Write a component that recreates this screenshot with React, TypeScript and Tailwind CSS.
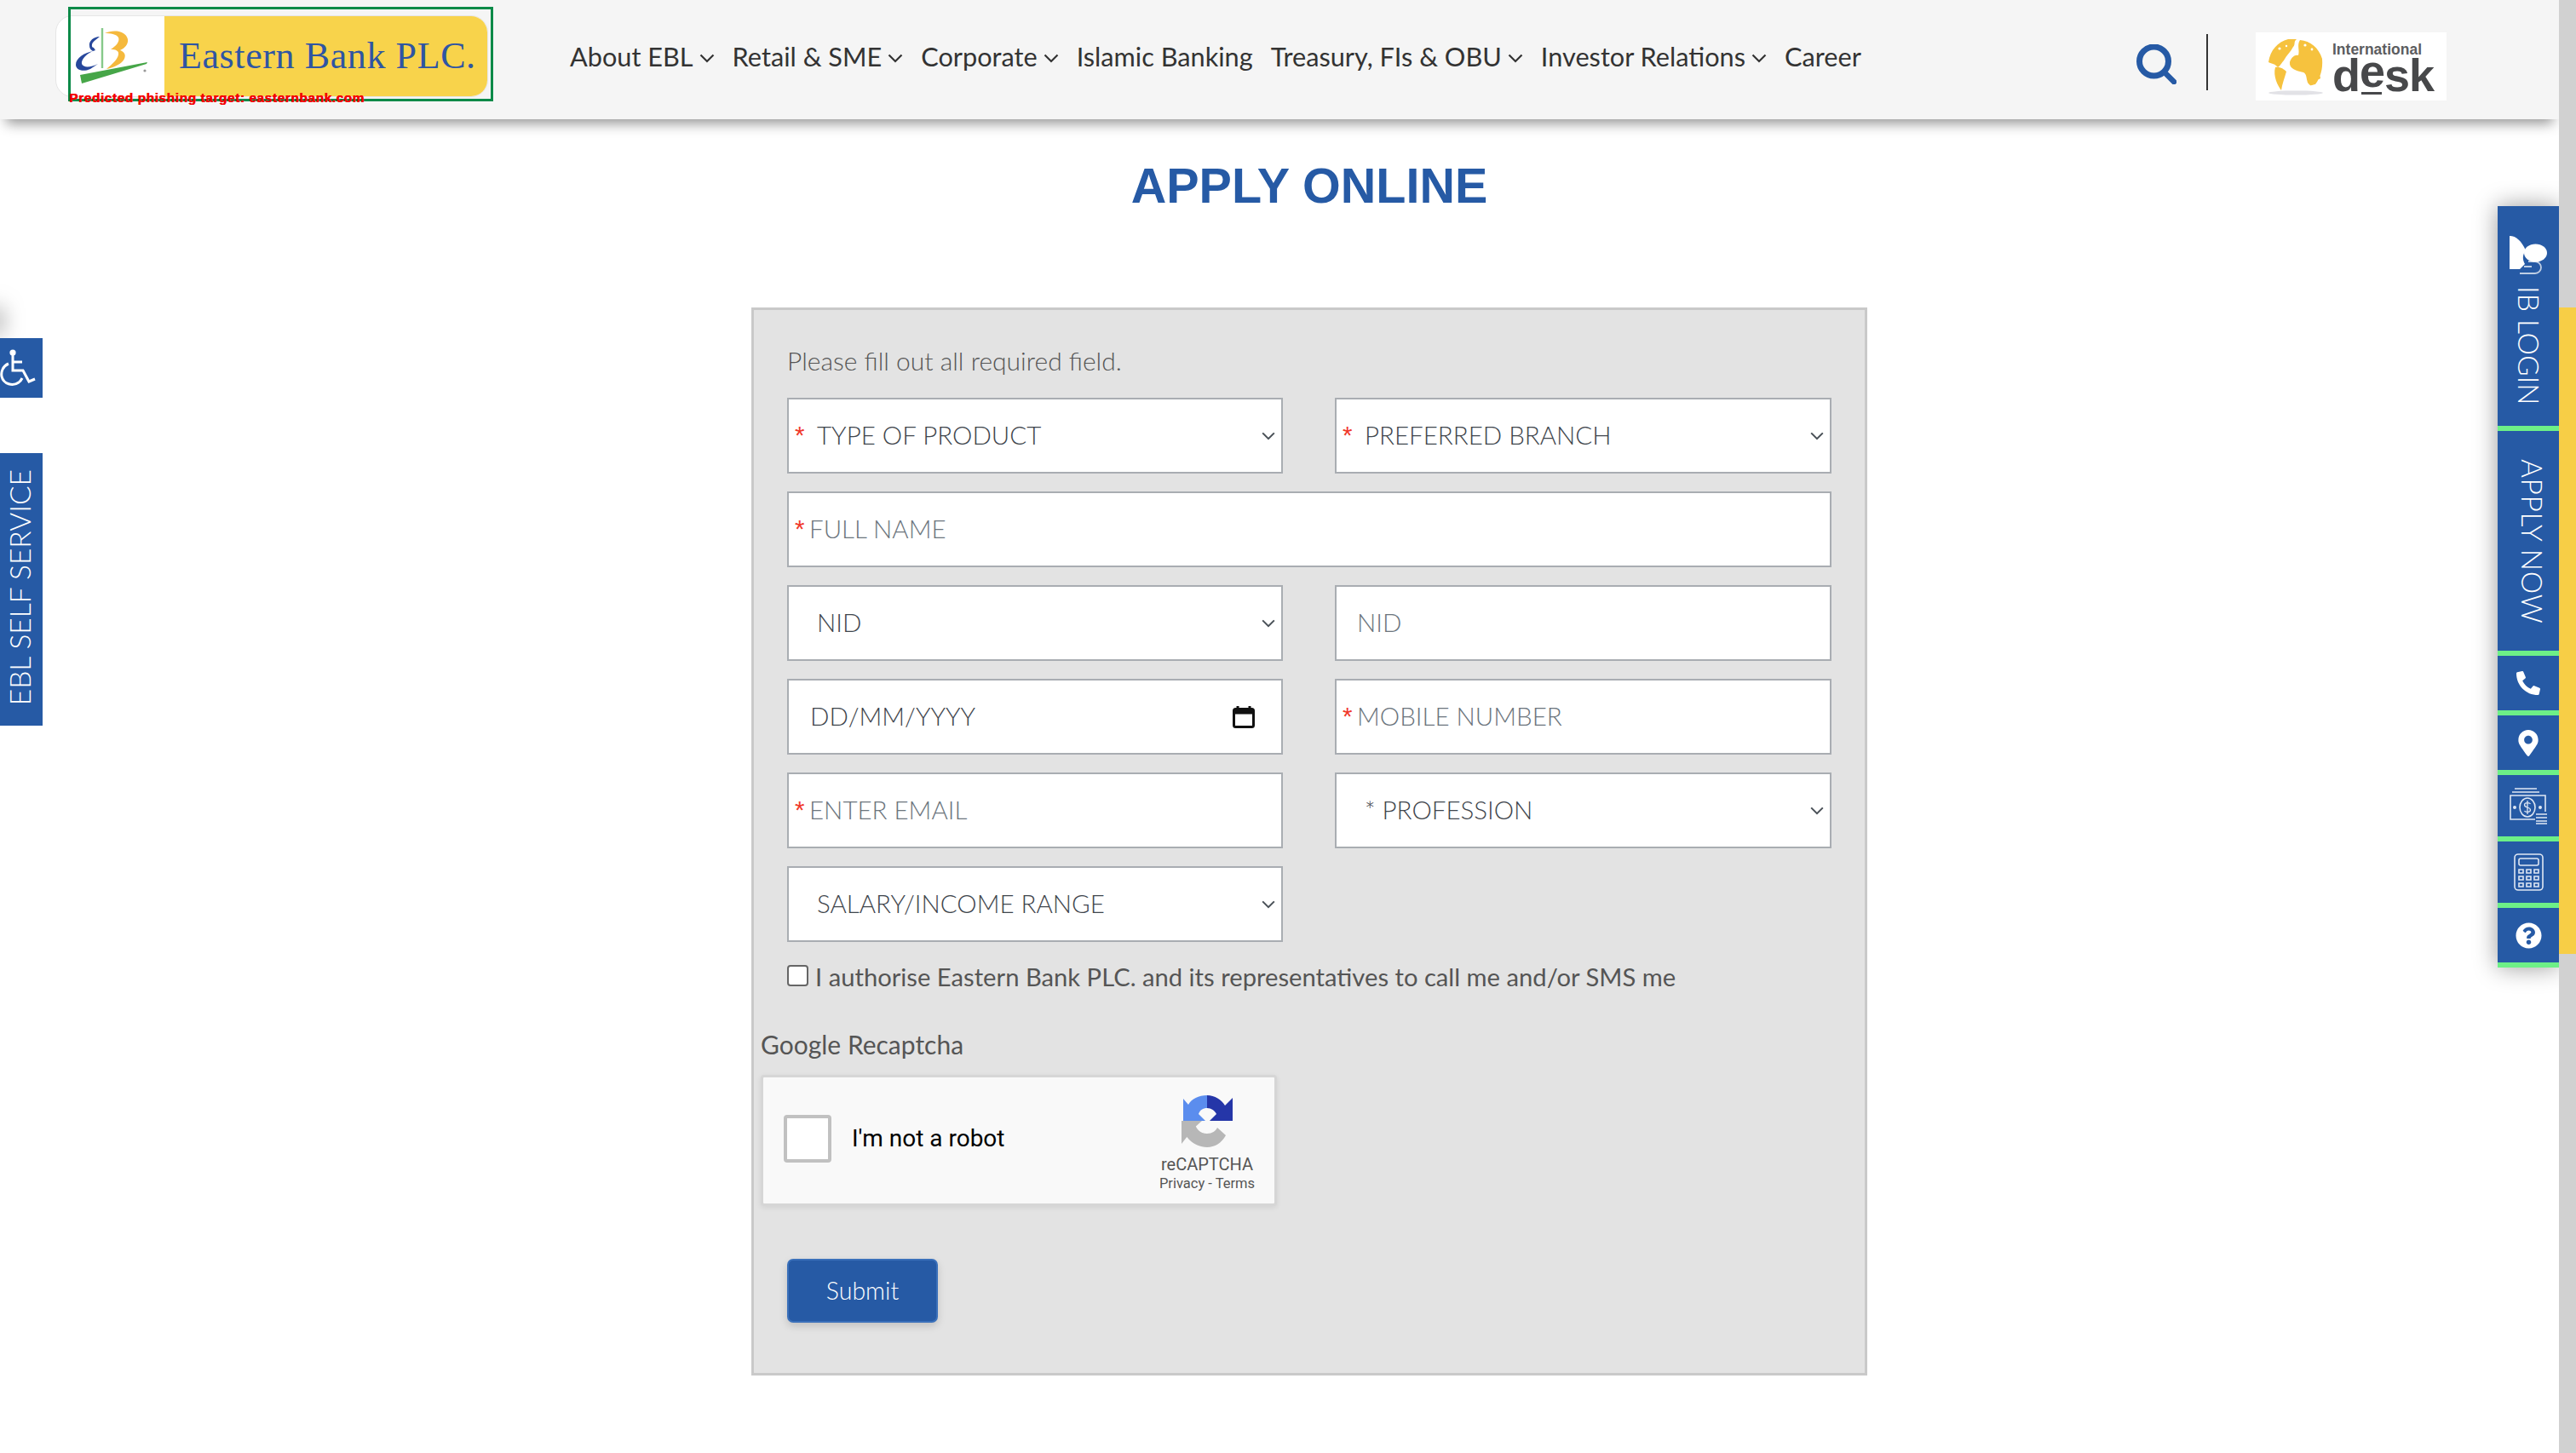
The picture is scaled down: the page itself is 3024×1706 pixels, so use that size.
import React from 'react';
import { FaPhoneAlt, FaMapMarkerAlt, FaQuestionCircle } from 'react-icons/fa';

const navItems = [
  { label: 'About EBL', menu: true },
  { label: 'Retail & SME', menu: true },
  { label: 'Corporate', menu: true },
  { label: 'Islamic Banking', menu: false },
  { label: 'Treasury, FIs & OBU', menu: true },
  { label: 'Investor Relations', menu: true },
  { label: 'Career', menu: false },
];

function Chevron({ className }: { className: string }) {
  return (
    <svg viewBox="0 0 18 11" fill="none" stroke="currentColor" className={className}>
      <path d="M1.5 1.5 9 9l7.5-7.5" strokeWidth="2.2" />
    </svg>
  );
}

function EblMark() {
  return (
    <svg viewBox="0 0 100 80" className="w-[100px] h-[80px] shrink-0 ml-[16px]">
      <path d="M35 17C28 17 22 22 23 28c0 3 2 5 4 6C17 36 7 42 7 50c0 6 8 9 17 5l9-6c-8 4-17 5-19 0-1-5 6-13 16-16l-2-3c-2 0-3-3-1-6 2-3 6-5 8-7z" fill="#27479c" />
      <path d="M41 13c9-4 24-4 27 7 1 6-4 11-9 13 5 2 7 5 5 10-3 6-12 10-21 12 7-6 13-11 14-17 1-5-4-6-9-6 6-4 11-9 9-14-2-4-10-5-16-5z" fill="#f5b93d" />
      <path d="M12 62 91 47l-1 2-76 23z" fill="#46a648" />
      <path d="M38 7v47" stroke="#86c98a" strokeWidth="2.4" />
      <circle cx="88" cy="57" r="1.6" fill="#999" />
    </svg>
  );
}

function Logo() {
  return (
    <div className="relative w-[508px] h-[96px] shrink-0 mb-[8px]">
      <div className="flex h-full rounded-[20px] overflow-hidden border border-[#e6e6e6] bg-white">
        <div className="w-[127px] flex items-center">
          <EblMark />
        </div>
        <div className="flex-1 bg-[#f8d34b] pl-[17px] flex items-center">
          <span className="font-['Liberation_Serif',serif] text-[44px] leading-none tracking-[0.6px] text-[#2f55a3] whitespace-nowrap">
            Eastern Bank PLC.
          </span>
        </div>
      </div>
      {/* detector box drawn on top of the page */}
      <div className="absolute left-[15px] top-[-10px] w-[499px] h-[111px] border-[3px] border-[#0b8a48]" />
      <span className="absolute left-[16px] top-[88px] text-[15.5px] leading-[18px] font-bold text-[#f30000] font-['Liberation_Sans',sans-serif] tracking-[0.55px] [text-shadow:0.5px_0_0_#f30000] whitespace-nowrap">
        Predicted phishing target: easternbank.com
      </span>
    </div>
  );
}

function DeskLogo() {
  return (
    <div className="w-[224px] h-[80px] bg-white ml-[56px] mt-[16px] flex items-start">
      <svg viewBox="0 0 66 68" className="w-[66px] h-[68px] ml-[14px] mt-[7px] shrink-0">
        <ellipse cx="33" cy="64" rx="32" ry="2.6" fill="#e2e2e6" />
        <g fill="#f6c23e">
          <path d="M24 1C12 4 3 14 1 28c4 2 8 2 11 6 3-2 5-6 7-8 3-6 8-10 11-16 3-3 0-6 4-9z" />
          <path d="M9 34c5-1 10 2 13 5-2 7-5 15-6 22-4-5-10-17-7-27z" />
          <path d="M38 2c12 1 22 9 26 22 1 12-2 22-8 30-4 0-5 4-9-2-2-6-1-10-5-12-8-2-17-4-16-12 2-6 6-9 10-8 2-6-2-12 2-18z" />
          <circle cx="60" cy="46" r="2" />
        </g>
        <g fill="#fff">
          <circle cx="44" cy="8" r="1.6" />
          <circle cx="52" cy="13" r="1.4" />
          <circle cx="14" cy="12" r="1.6" />
          <circle cx="22" cy="9" r="1.2" />
        </g>
      </svg>
      <div className="ml-[10px] mt-[13px] text-[#47484a] font-['Liberation_Sans',sans-serif]">
        <div className="text-[17.5px] leading-[14px] font-bold text-[#5c5d5f] whitespace-nowrap">International</div>
        <div className="flex text-[54px] leading-[46px] font-bold tracking-[-1px]">
          <span>d</span>
          <span className="relative top-[-5px] h-[46px]">
            e
            <span className="absolute left-[2px] right-[3px] top-[48px] h-[3px] bg-[#47484a]" />
          </span>
          <span>sk</span>
        </div>
      </div>
    </div>
  );
}

function Header() {
  return (
    <header className="relative z-10 h-[140px] bg-[#f5f5f5] flex items-center pl-[65px] pr-[132px] shadow-[0_12px_14px_-7px_rgba(0,0,0,0.42)]">
      <Logo />
      <nav className="ml-[96px] mb-[5px] flex items-center gap-[21px] text-[30.7px] leading-none text-[#333]">
        {navItems.map((item) => (
          <div key={item.label} className="flex items-center whitespace-nowrap">
            {item.label}
            {item.menu && <Chevron className="w-[18px] h-[11px] ml-[7px] mt-[3px]" />}
          </div>
        ))}
      </nav>
      <div className="ml-auto h-full flex items-center">
        <svg viewBox="0 0 47 47" fill="none" stroke="#265aa5" strokeLinecap="round" className="w-[47px] h-[47px] mt-[10px]">
          <circle cx="20.5" cy="20" r="17" strokeWidth="7" />
          <path d="M33 33l11 11" strokeWidth="6.5" />
        </svg>
        <div className="w-[2px] h-[66px] bg-[#333] ml-[35px] mt-[6px]" />
        <DeskLogo />
      </div>
    </header>
  );
}

function Req({ className }: { className: string }) {
  return <span className={`text-[#f0392b] font-normal font-['Liberation_Sans',sans-serif] ${className}`}>*</span>;
}

function Select({ label, star, pad }: { label: string; star?: boolean; pad: string }) {
  return (
    <div className="h-[89px] border-2 border-[#a9adb2] bg-white flex items-center text-[#3f464d] font-light text-[29.5px]">
      {star && <Req className="ml-[7px] w-[26px]" />}
      <span className={pad}>{label}</span>
      <Chevron className="w-[18px] h-[10px] ml-auto mr-[6px] text-[#495057]" />
    </div>
  );
}

function TextField({ label, star, className = '' }: { label: string; star?: boolean; className?: string }) {
  return (
    <div className={`h-[89px] border-2 border-[#a9adb2] bg-white flex items-center text-[#6c757d] font-light text-[29.5px] ${className}`}>
      {star ? <Req className="ml-[7px] w-[17px]" /> : <span className="w-[24px]" />}
      {label}
    </div>
  );
}

function RecaptchaLogo() {
  return (
    <svg viewBox="0 0 60 61" className="w-[60px] h-[61px]">
      <path d="M30 0C20 0 12 4 8 11L2 4v26h26l-8-8c2-5 5-7 10-7z" fill="#5b8dee" />
      <path d="M30 0c9 0 17 5 21 12l9-9v27H33l8-8c-2-4-6-7-11-7z" fill="#2536a8" />
      <path d="M0 30h15c1 9 7 15 15 15 6 0 10-3 12-7l10 9c-5 9-13 14-22 14-16 0-30-14-30-31z" fill="#b7b7b7" />
      <path d="M0 30l24 0-10 9-14 18z" fill="#b7b7b7" />
    </svg>
  );
}

function Recaptcha() {
  return (
    <div className="-ml-[31px] mt-[16px] w-[606px] h-[154px] border-[3px] border-[#d6d6d6] rounded-[4px] bg-[#f9f9f9] shadow-[0_2px_6px_rgba(0,0,0,0.08)] flex items-center font-['Roboto',sans-serif]">
      <div className="w-[56px] h-[56px] ml-[24px] mt-[-4px] border-[4px] border-[#c1c1c1] rounded-[4px] bg-white" />
      <span className="ml-[24px] mt-[-4px] text-[28px] text-black leading-none whitespace-nowrap">I'm not a robot</span>
      <div className="ml-auto mr-[22px] mt-[8px] w-[114px] flex flex-col items-center text-[#555]">
        <RecaptchaLogo />
        <span className="mt-[8px] text-[20px] leading-[24px]">reCAPTCHA</span>
        <span className="text-[16.5px] leading-[22px] whitespace-nowrap">Privacy - Terms</span>
      </div>
    </div>
  );
}

function ApplyForm() {
  return (
    <div className="ml-[882px] w-[1310px] mt-[113px] h-[1254px] border-[3px] border-[#c9c9c9] bg-[#e3e3e3] pl-[39px] pt-[39px] text-[30px] text-[#555]">
      <p className="h-[40px] leading-[40px] font-light">Please fill out all required field.</p>
      <div className="mt-[24px] grid grid-cols-[582px_583px] gap-x-[61px] gap-y-[21px]">
        <Select label="TYPE OF PRODUCT" star pad="" />
        <Select label="PREFERRED BRANCH" star pad="" />
        <TextField label="FULL NAME" star className="col-span-2" />
        <Select label="NID" pad="ml-[33px]" />
        <TextField label="NID" />
        <div className="h-[89px] border-2 border-[#a9adb2] bg-white flex items-center pl-[25px] pr-[31px] text-[#3f464d] font-light text-[29.5px]">
          DD/MM/YYYY
          <svg viewBox="0 0 26 26" className="w-[26px] h-[26px] ml-auto" fill="none" stroke="#111">
            <path d="M6 0v4M20 0v4" strokeWidth="3" />
            <rect x="1.5" y="3.5" width="23" height="21" rx="2" strokeWidth="3" />
            <path d="M1.5 7h23" strokeWidth="5" />
          </svg>
        </div>
        <TextField label="MOBILE NUMBER" star />
        <TextField label="ENTER EMAIL" star />
        <Select label="* PROFESSION" pad="ml-[33px]" />
        <Select label="SALARY/INCOME RANGE" pad="ml-[33px]" />
      </div>
      <label className="mt-[21px] h-[40px] flex items-center">
        <input type="checkbox" className="appearance-none w-[25px] h-[25px] mt-[-4px] bg-white border-2 border-[#666] rounded-[4px] shrink-0" />
        <span className="ml-[8px] text-[29.2px] whitespace-nowrap">I authorise Eastern Bank PLC. and its representatives to call me and/or SMS me</span>
      </label>
      <p className="-ml-[31px] mt-[39px] h-[40px] leading-[40px]">Google Recaptcha</p>
      <Recaptcha />
      <button className="block mt-[62px] w-[177px] h-[75px] bg-[#265aa5] border-2 border-[#3a70ba] rounded-[7px] text-white font-light text-[28.5px] shadow-[0_4px_10px_rgba(0,0,0,0.15)]">
        Submit
      </button>
    </div>
  );
}

function RightRail() {
  return (
    <aside className="absolute left-[2932px] top-[242px] w-[72px] flex flex-col bg-[#265aa5] text-white font-light shadow-[0_0_28px_rgba(0,0,0,0.4)] text-[33.5px] leading-none">
      <a className="h-[264px] border-b-[6px] border-[#6df087] flex flex-col items-center pt-[35px]">
        <svg viewBox="0 0 44 47" className="w-[44px] h-[47px]" fill="#fff">
          <path d="M0 0c8 0 14 6 19 17-4 5-4 11-1 16l-6 6H0z" />
          <ellipse cx="30.5" cy="20" rx="13.5" ry="10.5" />
          <path d="M12 44h18a7 7 0 0 0 0-14h-8M17 36h9" fill="none" stroke="#fff" strokeWidth="1.8" opacity="0.7" />
        </svg>
        <span className="[writing-mode:vertical-rl] mt-[12px] whitespace-nowrap">IB LOGIN</span>
      </a>
      <a className="h-[264px] border-b-[6px] border-[#6df087] flex justify-center pt-[33px] pl-[8px]">
        <span className="[writing-mode:vertical-rl] tracking-[0.6px] whitespace-nowrap">APPLY NOW</span>
      </a>
      <a className="h-[70px] border-b-[6px] border-[#6df087] flex items-center justify-center">
        <FaPhoneAlt className="w-[28px] h-[28px]" />
      </a>
      <a className="h-[70px] border-b-[6px] border-[#6df087] flex items-center justify-center">
        <FaMapMarkerAlt className="w-[24px] h-[31px]" />
      </a>
      <a className="h-[78px] border-b-[6px] border-[#6df087] flex items-center justify-center">
        <svg viewBox="0 0 44 43" className="w-[44px] h-[43px]" fill="none" stroke="#dfe7f3" strokeWidth="1.6">
          <path d="M6 1h26M3 5h32" />
          <path d="M30 37H1V9h41v19" />
          <ellipse cx="21" cy="23" rx="9" ry="11" />
          <path d="M24.5 19c-1-2-7-2-7 1 0 4 7 2 7 6 0 3-6 3-7 1M21 15v16" strokeWidth="1.3" />
          <circle cx="6" cy="23" r="1.2" fill="#dfe7f3" />
          <circle cx="36" cy="23" r="1.2" fill="#dfe7f3" />
          <path d="M31 31h13M31 35h13M31 39h13M31 42h13" />
        </svg>
      </a>
      <a className="h-[78px] border-b-[6px] border-[#6df087] flex items-center justify-center">
        <svg viewBox="0 0 35 44" className="w-[35px] h-[44px]" fill="none" stroke="#dfe7f3" strokeWidth="1.6">
          <rect x="1" y="1" width="33" height="42" rx="4" />
          <rect x="6" y="6" width="23" height="8" rx="2" />
          <path d="M6 19h5v4H6zM15 19h5v4h-5zM24 19h5v4h-5zM6 27h5v4H6zM15 27h5v4h-5zM24 27h5v4h-5zM6 35h5v4H6zM15 35h5v4h-5zM24 35h5v4h-5z" />
        </svg>
      </a>
      <a className="h-[70px] border-b-[6px] border-[#6df087] flex items-center justify-center">
        <FaQuestionCircle className="w-[31px] h-[31px]" />
      </a>
    </aside>
  );
}

function LeftRail() {
  return (
    <>
      <div className="absolute left-[-12px] top-[362px] w-[12px] h-[30px] shadow-[0_0_26px_rgba(0,0,0,0.55)]" />
      <a className="absolute left-0 top-[397px] w-[50px] h-[70px] bg-[#265aa5] flex items-center">
        <svg viewBox="0 0 42 44" className="w-[42px] h-[44px]" fill="none" stroke="#fff" strokeWidth="3">
          <circle cx="15" cy="4" r="3.6" fill="#fff" stroke="none" />
          <path d="M15 7v18h12l7 13 7-3" />
          <path d="M15 15h11" />
          <path d="M10 17C3 20 1 27 2 32c2 9 13 12 20 7 2-1 3-3 4-5" />
        </svg>
      </a>
      <a className="absolute left-0 top-[532px] w-[50px] h-[320px] bg-[#265aa5] text-white font-light text-[33.5px] leading-none flex items-center justify-center">
        <span className="[writing-mode:vertical-rl] rotate-180 mb-[4px] mr-[2px] whitespace-nowrap">EBL SELF SERVICE</span>
      </a>
    </>
  );
}

export default function App() {
  return (
    <div className="relative flex h-[1706px] overflow-hidden bg-white font-['Lato',sans-serif]">
      <div className="flex-1">
        <Header />
        <h1 className="mt-[48px] ml-[882px] w-[1310px] h-[60px] leading-[60px] text-center text-[57.5px] font-bold text-[#265aa5] font-['Liberation_Sans',sans-serif]">
          APPLY ONLINE
        </h1>
        <ApplyForm />
      </div>
      <div className="relative z-20 w-[20px] bg-[#d1d1d1]">
        <div className="mt-[361px] h-[759px] bg-[#f7ce46]" />
      </div>
      <LeftRail />
      <RightRail />
    </div>
  );
}
